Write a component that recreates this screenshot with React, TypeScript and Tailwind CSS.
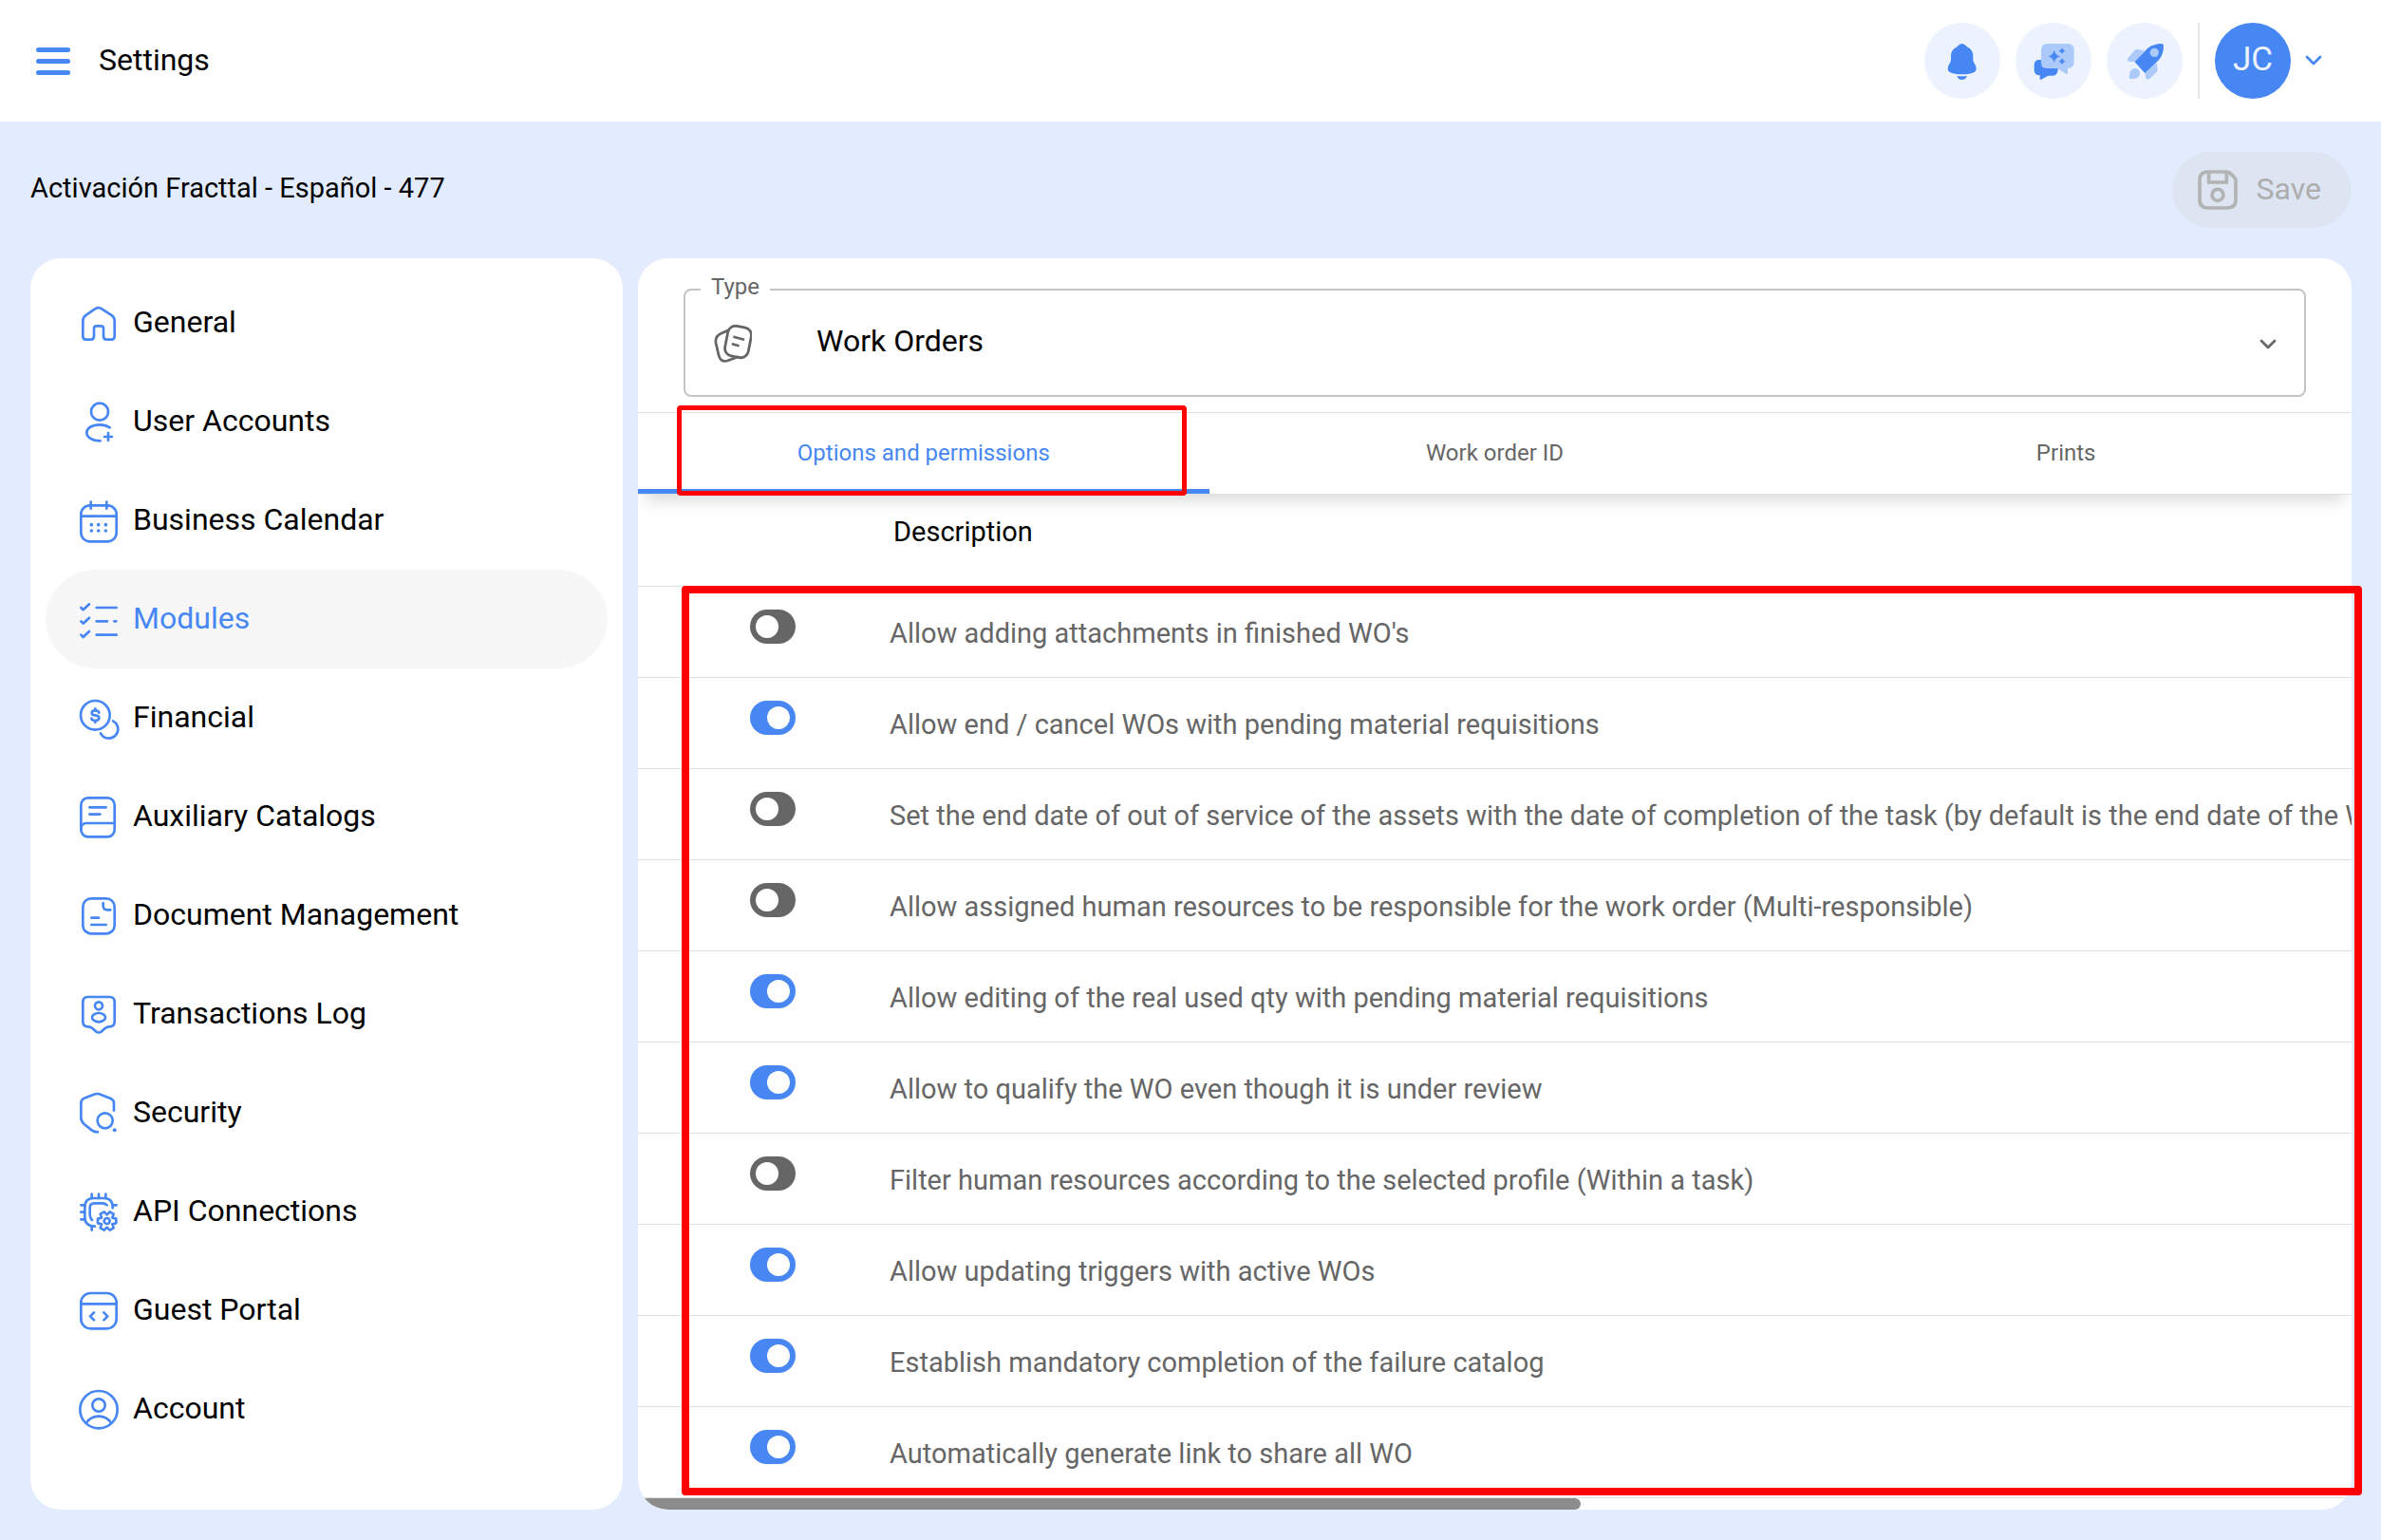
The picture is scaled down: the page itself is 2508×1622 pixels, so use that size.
import React, { useState } from "react";

interface NavItem {
  label: string;
  icon: React.ReactNode;
}

interface Permission {
  id: number;
  label: string;
  enabled: boolean;
}

const NAV_ITEMS: NavItem[] = [
  {
    label: "General",
    icon: (
      <path d="M22 66Q22 55 30 49L59 29Q71 20 83 29L114 49Q122 55 122 66V115Q122 125 112 125H97Q87 125 87 115V90Q87 82 79 82H65Q57 82 57 90V115Q57 125 47 125H32Q22 125 22 115Z" />
    ),
  },
  {
    label: "User Accounts",
    icon: (
      <>
        <circle cx="75" cy="41" r="27" />
        <path d="M107 91Q93 82 75 82C50 82 34 93 34 107C34 122 52 133 77 133M102 108V132M90 120H114" />
      </>
    ),
  },
  {
    label: "Business Calendar",
    icon: (
      <>
        <rect x="16" y="25" width="112" height="114" rx="28" />
        <path d="M16 59H128M47 14V35M97 14V35" />
        <path strokeWidth={11} d="M49 86h.1M71 86h.1M94 86h.1M49 105h.1M71 105h.1M94 105h.1" />
      </>
    ),
  },
  {
    label: "Modules",
    icon: (
      <>
        <path d="M65 36H128M65 79H99M121 79H127M65 122H128" />
        <path d="M16 36L23 43L42 25M16 79L23 86L42 68M16 122L23 129L42 111" />
      </>
    ),
  },
  {
    label: "Financial",
    icon: (
      <>
        <circle cx="61" cy="64" r="46" />
        <path d="M117 82A29 29 0 1 1 78 121" />
        <path d="M73 56Q71 49 61 49Q50 49 50 56Q50 64 61 64Q73 65 73 73Q73 81 61 81Q51 81 49 74M61 43V49M61 81V87" />
      </>
    ),
  },
  {
    label: "Auxiliary Catalogs",
    icon: (
      <>
        <rect x="16" y="13" width="106" height="123" rx="22" />
        <path d="M43 43H95M43 65H76M122 93H34Q16 93 16 112" />
      </>
    ),
  },
  {
    label: "Document Management",
    icon: (
      <>
        <rect x="22" y="19" width="100" height="111" rx="26" />
        <path d="M86 33V42Q86 55 99 55H109M49 80H72M49 102H95" />
      </>
    ),
  },
  {
    label: "Transactions Log",
    icon: (
      <>
        <path d="M38 18H106Q122 18 122 34V96Q122 112 106 112Q97 112 91 118L80 128Q72 133 64 128L53 118Q47 112 38 112Q22 112 22 96V34Q22 18 38 18Z" />
        <circle cx="72" cy="46" r="12" />
        <ellipse cx="72" cy="83" rx="21" ry="14" />
      </>
    ),
  },
  {
    label: "Security",
    icon: (
      <>
        <path d="M120 65V42Q120 32 110 27L77 14Q67 10 57 14L26 26Q16 31 16 42V88Q16 100 26 108L50 127Q58 133 69 133" />
        <circle cx="92" cy="97" r="24" />
        <path strokeWidth={12} d="M122 127h.1" />
      </>
    ),
  },
  {
    label: "API Connections",
    icon: (
      <>
        <path d="M116 61V58Q116 30 88 30H56Q28 30 28 58V90Q28 118 60 119" />
        <path d="M98 52Q92 46 84 46H58Q44 46 44 60V82Q44 92 51 99" />
        <path d="M50 17V30M72 17V30M94 17V30M16 52H28M16 74H28M16 97H28M116 52H128M50 118V131" />
        <circle cx="98" cy="102" r="9" />
        <path d="M127 95V109L115 112L119 124L107 131L98 122L89 131L77 124L81 112L69 109V95L81 92L77 80L89 73L98 82L107 73L119 80L115 92Z" />
      </>
    ),
  },
  {
    label: "Guest Portal",
    icon: (
      <>
        <rect x="16" y="18" width="112" height="112" rx="30" />
        <path d="M16 52H128M57 79L45 91L57 103M88 79L100 91L88 103" />
      </>
    ),
  },
  {
    label: "Account",
    icon: (
      <>
        <circle cx="72" cy="74" r="59" />
        <circle cx="72" cy="60" r="20" />
        <path d="M33 116Q47 95 72 95Q97 95 111 116" />
      </>
    ),
  },
];

const PERMISSIONS: Permission[] = [
  { id: 1, label: "Allow adding attachments in finished WO's", enabled: false },
  { id: 2, label: "Allow end / cancel WOs with pending material requisitions", enabled: true },
  {
    id: 3,
    label:
      "Set the end date of out of service of the assets with the date of completion of the task (by default is the end date of the WO)",
    enabled: false,
  },
  {
    id: 4,
    label: "Allow assigned human resources to be responsible for the work order (Multi-responsible)",
    enabled: false,
  },
  { id: 5, label: "Allow editing of the real used qty with pending material requisitions", enabled: true },
  { id: 6, label: "Allow to qualify the WO even though it is under review", enabled: true },
  { id: 7, label: "Filter human resources according to the selected profile (Within a task)", enabled: false },
  { id: 8, label: "Allow updating triggers with active WOs", enabled: true },
  { id: 9, label: "Establish mandatory completion of the failure catalog", enabled: true },
  { id: 10, label: "Automatically generate link to share all WO", enabled: true },
];

const TABS = ["Options and permissions", "Work order ID", "Prints"];

const Chevron: React.FC<{ className?: string }> = ({ className }) => (
  <svg
    viewBox="0 0 18 12"
    className={className}
    fill="none"
    stroke="currentColor"
    strokeWidth={2.8}
    strokeLinecap="round"
    strokeLinejoin="round"
  >
    <path d="M2 2L9 9L16 2" />
  </svg>
);

const Header: React.FC = () => (
  <header className="flex h-32 items-center justify-between bg-white pr-[62px] pl-[38px]">
    <div className="flex items-center">
      <button type="button" aria-label="Menu" className="flex w-9 flex-col gap-[7px]">
        <span className="h-[5px] w-full rounded-full bg-[#4787f3]" />
        <span className="h-[5px] w-full rounded-full bg-[#4787f3]" />
        <span className="h-[5px] w-full rounded-full bg-[#4787f3]" />
      </button>
      <h1 className="ml-[30px] pb-0.5 text-[32px] leading-10">Settings</h1>
    </div>

    <div className="flex items-center gap-4">
      {/* Notifications */}
      <button type="button" aria-label="Notifications" className="size-20 rounded-full bg-[#ecf3fe]">
        <svg viewBox="0 0 240 240" className="size-20" fill="#4787f3">
          <path d="M119 66Q125 66 130 71Q135 76 143 81Q154 89 154 106V118Q154 124 160 132Q164 138 164 146Q164 152 158 156Q145 163 119 163Q93 163 80 156Q74 152 74 146Q74 138 78 132Q84 124 84 118V106Q84 89 95 81Q103 76 108 71Q113 66 119 66Z" />
          <path d="M103 168Q119 170 135 168Q131 180 119 180Q107 180 103 168Z" />
        </svg>
      </button>
      {/* Assistant chat */}
      <button type="button" aria-label="Assistant" className="size-20 rounded-full bg-[#ecf3fe]">
        <svg viewBox="0 0 240 240" className="size-20" fill="#4787f3">
          <path d="M85 117H75Q59 117 59 134V149Q59 166 77 166V176Q77 181 82 179L103 167H118Q133 165 134 149V140H85Z" />
          <path
            fill="#abc9f9"
            d="M101 66H165Q185 66 185 86V125Q185 142 165 144V158Q165 163 160 161L132 144H101Q81 144 81 125V86Q81 66 101 66Z"
          />
          <path d="M122 86Q125 103 143 106Q125 109 122 126Q119 109 102 106Q119 103 122 86Z" />
          <path d="M147 79Q149 87 157 89Q149 91 147 99Q145 91 137 89Q145 87 147 79Z" />
          <path d="M147 112Q149 120 157 122Q149 124 147 132Q145 124 137 122Q145 120 147 112Z" />
        </svg>
      </button>
      {/* Getting started */}
      <button type="button" aria-label="Getting started" className="size-20 rounded-full bg-[#ecf3fe]">
        <svg viewBox="0 0 240 240" className="size-20" fill="#abc9f9">
          <path d="M120 88L98 84Q92 83 88 88L67 112Q62 121 72 123L88 122Z" />
          <path d="M157 126L161 146Q162 152 157 157L136 177Q126 183 124 174L121 159Z" />
          <path d="M90 144Q105 145 105 160Q104 174 90 176L76 178Q70 178 71 172L74 156Q78 144 90 144Z" />
          <path fill="#4787f3" d="M88 123L130 80Q150 66 173 66Q180 66 180 74Q180 98 166 116L121 159Z" />
          <circle cx="151" cy="94" r="14" />
        </svg>
      </button>
      <div className="h-20 w-0.5 bg-[#e6e6e6]" />
      <div className="flex items-center gap-[15px]">
        <span className="flex size-20 items-center justify-center rounded-full bg-[#4787f3] pb-0.5 text-[35px] leading-10 text-[#ecf3fe]">
          JC
        </span>
        <button type="button" aria-label="Account menu" className="text-[#4787f3]">
          <Chevron className="h-3 w-[18px]" />
        </button>
      </div>
    </div>
  </header>
);

const Sidebar: React.FC = () => (
  <nav className="rounded-[32px] bg-white p-4">
    <ul>
      {NAV_ITEMS.map((item) => {
        const active = item.label === "Modules";
        return (
          <li key={item.label}>
            <a
              href="#"
              className={`flex h-[104px] items-center gap-3 rounded-full px-8 text-[32px] leading-10 ${
                active ? "bg-[#f7f7f7] text-[#4787f3]" : "text-black"
              }`}
            >
              <svg
                viewBox="0 0 144 144"
                className="size-12 shrink-0"
                fill="none"
                stroke="#4787f3"
                strokeWidth={8}
                strokeLinecap="round"
                strokeLinejoin="round"
              >
                {item.icon}
              </svg>
              <span className="pb-0.5">{item.label}</span>
            </a>
          </li>
        );
      })}
    </ul>
  </nav>
);

const TypeSelect: React.FC = () => (
  <div className="px-12 pt-8 pb-4">
    <div className="relative rounded-lg border-2 border-[#c4c4c4]">
      <label htmlFor="type" className="absolute -top-5 left-4 bg-white px-[11px] text-[24px] leading-8 text-[#666]">
        Type
      </label>
      <svg
        viewBox="0 0 40 40"
        className="pointer-events-none absolute top-9 left-[30px] size-10"
        fill="none"
        stroke="#666"
        strokeWidth={2.8}
        strokeLinecap="round"
        strokeLinejoin="round"
      >
        <rect x="13" y="2" width="25" height="32" rx="8" transform="rotate(11 25.5 18)" />
        <path d="M15 6L8 9Q1 12 2 19L5 32Q7 40 14 38L25 34" />
        <path d="M21.5 13L31 15.5M20 20.5L25.5 22" />
      </svg>
      <select
        id="type"
        defaultValue="Work Orders"
        className="block h-[110px] w-full appearance-none bg-transparent pr-20 pb-1 pl-[138px] text-[32px] leading-10 text-black outline-none"
      >
        <option>Work Orders</option>
      </select>
      <Chevron className="pointer-events-none absolute top-[51px] right-[29px] h-3 w-[18px] text-[#666]" />
    </div>
  </div>
);

const PermissionsTable: React.FC = () => {
  const [permissions, setPermissions] = useState(PERMISSIONS);

  const toggle = (id: number) => {
    setPermissions((prev) => prev.map((p) => (p.id === id ? { ...p, enabled: !p.enabled } : p)));
  };

  return (
    <table className="w-full table-fixed border-collapse whitespace-nowrap">
      <colgroup>
        <col className="w-[265px]" />
        <col />
      </colgroup>
      <thead>
        <tr className="h-24 border-b border-[#e0e0e0]">
          <th aria-label="Enabled" />
          <th className="pb-[18px] pl-1 text-left text-[29px] leading-9 font-normal text-black">Description</th>
        </tr>
      </thead>
      <tbody>
        {permissions.map((permission) => (
          <tr key={permission.id} className="h-24 border-b border-[#e0e0e0]">
            <td className="pb-[11px] pl-[118px]">
              <input
                id={`permission-${permission.id}`}
                type="checkbox"
                checked={permission.enabled}
                onChange={() => toggle(permission.id)}
                className="block h-9 w-12 appearance-none rounded-full bg-[#666] p-1.5 before:block before:size-6 before:rounded-full before:bg-white checked:bg-[#4787f3] checked:pl-[18px]"
              />
            </td>
            <td className="pt-1 text-[29px] leading-9 text-[#666]">
              <label htmlFor={`permission-${permission.id}`}>{permission.label}</label>
            </td>
          </tr>
        ))}
      </tbody>
    </table>
  );
};

const App: React.FC = () => {
  const [activeTab, setActiveTab] = useState(TABS[0]);

  return (
    <div className="flex min-h-screen flex-col bg-[#e3ecfe] font-[Roboto,sans-serif] text-black">
      <Header />

      <div className="flex flex-1 flex-col py-8 pr-[31px] pl-8">
        {/* Company name and save */}
        <div className="flex h-20 items-center justify-between">
          <h2 className="pb-1 text-[29px] leading-9">Activación Fracttal - Español - 477</h2>
          <button
            type="button"
            disabled
            className="flex h-20 items-center gap-5 rounded-full bg-[#dde5f3] pr-8 pl-[27px] text-[32px] leading-10 text-[#adadad]"
          >
            <svg viewBox="0 0 126 126" className="size-[42px]" fill="none" stroke="#b3b3b3" strokeWidth={11}>
              <path
                strokeLinejoin="round"
                d="M32 6H92Q98 6 102 10L116 24Q120 28 120 34V94Q120 120 94 120H32Q6 120 6 94V32Q6 6 32 6Z"
              />
              <path d="M35 6V39H91V8" />
              <circle cx="63" cy="79" r="18" />
            </svg>
            <span className="pb-0.5">Save</span>
          </button>
        </div>

        <div className="mt-8 grid flex-1 grid-cols-[624px_minmax(0,1fr)] gap-4">
          <Sidebar />

          <div className="relative">
            <main className="flex h-full flex-col overflow-hidden rounded-[32px] bg-white">
              <TypeSelect />

              {/* Tabs */}
              <div
                role="tablist"
                className="grid grid-cols-3 border-y border-[#e0e0e0] shadow-[0_14px_16px_-8px_rgba(0,0,0,0.15)]"
              >
                {TABS.map((tab) => (
                  <button
                    key={tab}
                    type="button"
                    role="tab"
                    aria-selected={tab === activeTab}
                    onClick={() => setActiveTab(tab)}
                    className={`h-[85px] border-b-[5px] pt-1 text-[24px] leading-8 ${
                      tab === activeTab ? "border-[#4787f3] text-[#4787f3]" : "border-transparent text-[#666]"
                    }`}
                  >
                    {tab}
                  </button>
                ))}
              </div>

              <PermissionsTable />

              {/* Horizontal scroll position */}
              <div className="h-3 bg-white">
                <div className="h-full w-[55%] rounded-r-full bg-[#8c8c8c]" />
              </div>
            </main>

            {/* Highlight frames */}
            <div className="pointer-events-none absolute top-[155px] left-[41px] h-[95px] w-[537px] rounded-sm border-[5px] border-[#ff0000]" />
            <div className="pointer-events-none absolute top-[345px] -right-[11px] bottom-[15px] left-[46px] rounded-sm border-8 border-[#ff0000]" />
          </div>
        </div>
      </div>
    </div>
  );
};

export default App;
